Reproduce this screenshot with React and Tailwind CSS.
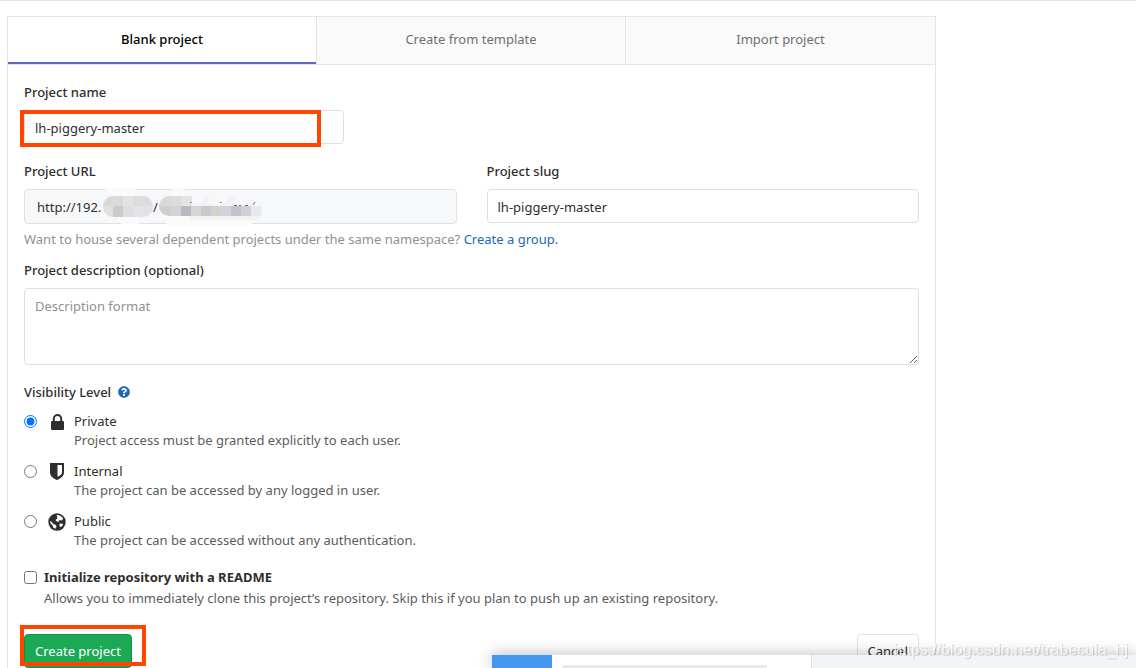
import React, { useState } from 'react';
import { FaQuestionCircle } from 'react-icons/fa';

const TABS = ['Blank project', 'Create from template', 'Import project'];

function LockIcon() {
  return (
    <svg width="13" height="16" viewBox="0 0 13 16" aria-hidden="true">
      <path fill="none" stroke="#2e2e2e" strokeWidth="2" d="M2.800 8V4.700a3.700 3.700 0 0 1 7.400 0V8" />
      <rect y="7" width="13" height="9" rx="1" fill="#2e2e2e" />
    </svg>
  );
}

function ShieldIcon() {
  return (
    <svg width="14" height="17" viewBox="0 0 14 17" aria-hidden="true">
      <path fill="#2e2e2e" fillRule="evenodd" d="M0 0h14v9.500c0 3.800-3.500 6-7 7.500-3.500-1.500-7-3.700-7-7.500zm7.500 2v11.800c2.300-1.100 4.500-2.500 4.500-4.600V2z" />
    </svg>
  );
}

function EarthIcon() {
  return (
    <svg width="18" height="18" viewBox="0 0 18 18" aria-hidden="true">
      <circle cx="9" cy="9" r="8.700" fill="#2e2e2e" />
      <path fill="#fff" d="M8.500 2.100c3-.2 5.400 1.100 6.700 3.700l-1.600 1.600-1.900-.4-1.200 1.700-1.700-.3-1.400-1.300 1.700-1.300.2-1.700z" />
      <path fill="#fff" d="M2 8l1.800 1 1.500 1.900 2.600 1.200.6 1.500-1 2.100-2.300-.9-.5-2.300-2-1.700z" />
      <path fill="#fff" d="M11.300 10.800l2.700-.3 1.200 1-1.500 2-1.900.4z" />
    </svg>
  );
}

const LEVELS = [
  {
    id: 'private',
    name: 'Private',
    help: 'Project access must be granted explicitly to each user.',
    icon: <LockIcon />,
  },
  {
    id: 'internal',
    name: 'Internal',
    help: 'The project can be accessed by any logged in user.',
    icon: <ShieldIcon />,
  },
  {
    id: 'public',
    name: 'Public',
    help: 'The project can be accessed without any authentication.',
    icon: <EarthIcon />,
  },
];

const HOST_TOP = ['#d9d9da', '#dadadb', '#e2e4e4', '#dcdcdd', '#dcdbdf'];
const HOST_BOTTOM = ['#e0e0e0', '#cbcbcf', '#dededf', '#e3e2e8', '#e2e1e7'];
const PATH_TOP = ['#dadadb', '#dcdcdd', '#e3e4e5'];
const PATH_BOTTOM = ['#cfced0', '#d4d4d5', '#b9b9c1', '#d5d5d6', '#c9c9cd', '#d6d0cc', '#d2d3de', '#c6c3c9', '#d1cfd5', '#e8e9ec'];

// pixelated host part of the namespace url
function MaskedHost() {
  return (
    <svg width="50" height="33" className="shrink-0 overflow-visible" aria-hidden="true">
      <path fill="#fafafb" d="M2-2h30v8H4zM14 26h22v8H18z" />
      <clipPath id="host"><rect y="6" width="50" height="21" rx="10" /></clipPath>
      <g clipPath="url(#host)">
        {HOST_TOP.map((c, i) => <rect key={i} x={i * 10} y="6" width="10" height="10" fill={c} />)}
        {HOST_BOTTOM.map((c, i) => <rect key={i} x={i * 10} y="16" width="10" height="11" fill={c} />)}
      </g>
    </svg>
  );
}

// pixelated group part of the namespace url
function MaskedPath() {
  return (
    <svg width="104" height="33" className="shrink-0 overflow-visible" aria-hidden="true">
      <path fill="#fafafb" d="M14-2h12v8H14zM4 26h92l-4 9H8z" />
      <path fill="#f1f2f4" d="M30 12l10 2 8-7 3 1-4 6 14 1 12-8 4 1-3 6 20 2 8 4q4 5-2 10H30z" />
      <clipPath id="path"><rect y="6" width="116" height="20" rx="10" /></clipPath>
      <g clipPath="url(#path)">
        {PATH_TOP.map((c, i) => <rect key={i} x={i * 11} y="6" width="11" height="10" fill={c} />)}
        {PATH_BOTTOM.map((c, i) => <rect key={i} x={i * 10 + 2} y="16" width="10" height="10" fill={c} />)}
        <rect y="16" width="3" height="10" fill="#cfced0" />
      </g>
      <path stroke="#6b6b76" fill="none" d="M31 12.500h1.500M61 12.500h1.500M75 15.500h3M80 15.500h2M86 15.500h3M94 15l2-3" />
    </svg>
  );
}

const inputClass = 'block h-[34px] w-full rounded border border-[#dfdfdf] bg-white px-[10px] pt-px text-[#2e2e2e]';
const labelClass = 'block h-5 font-medium';

function App() {
  const [tab, setTab] = useState(TABS[0]);
  const [name, setName] = useState('lh-piggery-master');
  const [level, setLevel] = useState('private');

  return (
    <div className="h-screen overflow-hidden border-t border-[#e5e5e5] bg-white pt-[15px] font-['Noto_Sans',sans-serif] text-[13px] leading-5 text-[#2e2e2e]">
      <main className="mr-[200px] ml-[7px] border border-[#e5e5e5]">
        <nav className="grid grid-cols-3 border-b border-[#e5e5e5]">
          {TABS.map((t) => (
            <div key={t} className="border-r border-[#e5e5e5] last:border-r-0">
              <button
                type="button"
                onClick={() => setTab(t)}
                className={
                  t === tab
                    ? 'block h-[47px] w-full border-b-2 border-[#6666c4] bg-white pb-0.5 font-medium text-black'
                    : 'block h-[47px] w-full bg-[#fafafa] pb-1 text-[#707070]'
                }
              >
                {t}
              </button>
            </div>
          ))}
        </nav>

        <form className="px-4 pt-[17px]" onSubmit={(e) => e.preventDefault()}>
          <label htmlFor="name" className={labelClass}>Project name</label>
          <div className="relative mt-2 w-[320px]">
            <input id="name" value={name} onChange={(e) => setName(e.target.value)} className={inputClass} />
            <div className="pointer-events-none absolute top-0 -left-1 h-[37px] w-[301px] border-4 border-[#ff4500]" />
          </div>

          <div className="mt-[17px] grid grid-cols-2 gap-[30px]">
            <div>
              <label htmlFor="url" className={labelClass}>Project URL</label>
              <div className="mt-2 flex h-[35px] items-center rounded border border-[#e1e1e1] bg-[#f7f8fa] pl-3">
                <input id="url" readOnly value="http://192." className="w-[66px] bg-transparent" />
                <MaskedHost />
                <span className="w-[6px]">/</span>
                <MaskedPath />
              </div>
            </div>
            <div>
              <label htmlFor="slug" className={labelClass}>Project slug</label>
              <input id="slug" value={name} onChange={(e) => setName(e.target.value)} className={`mt-2 ${inputClass}`} />
            </div>
          </div>

          <p className="mt-[5px] text-[#919191]">
            Want to house several dependent projects under the same namespace?{' '}
            <a href="#group" className="text-[#1b69b6]">Create a group.</a>
          </p>

          <label htmlFor="description" className={`mt-[11px] ${labelClass}`}>Project description (optional)</label>
          <textarea
            id="description"
            placeholder="Description format"
            className="mt-2 block h-[77px] w-full rounded border border-[#dfdfdf] px-[10px] py-[7px] placeholder:text-[#919191]"
          />

          <fieldset className="mt-[17px]">
            <legend className="flex items-center gap-[7px] font-medium">
              Visibility Level
              <a href="#help" aria-label="Visibility help" className="text-[#1b69b6]"><FaQuestionCircle size={12} /></a>
            </legend>
            <div className="mt-[9px] flex flex-col gap-[11px]">
              {LEVELS.map((l) => (
                <label key={l.id} className="flex h-[39px] items-start">
                  <input
                    type="radio"
                    name="level"
                    checked={level === l.id}
                    onChange={() => setLevel(l.id)}
                    className="mt-1 h-[13px] w-[13px]"
                  />
                  <span className="ml-[11px] flex h-[21px] w-[18px] items-center justify-center">{l.icon}</span>
                  <span className="ml-2">
                    <span className="block h-[19px]">{l.name}</span>
                    <span className="block text-[#5c5c5c]">{l.help}</span>
                  </span>
                </label>
              ))}
            </div>
          </fieldset>

          <label className="mt-[17px] flex items-start gap-[7px]">
            <input type="checkbox" className="mt-1 h-[13px] w-[13px]" />
            <span>
              <span className="block font-bold">Initialize repository with a README</span>
              <span className="mt-px block text-[#5c5c5c]">
                Allows you to immediately clone this project’s repository. Skip this if you plan to push up an existing repository.
              </span>
            </span>
          </label>

          <div className="mt-[26px] flex justify-between pb-4">
            <div className="relative">
              <button type="submit" className="h-[34px] rounded border border-[#168f48] bg-[#1aaa55] px-[10px] text-white">
                Create project
              </button>
              <div className="pointer-events-none absolute -top-[9px] -left-1 h-[41px] w-[126px] border-4 border-[#ff4500]" />
            </div>
            <button type="button" className="h-[34px] rounded border border-[#e3e3e3] px-[10px]">Cancel</button>
          </div>
        </form>
      </main>

      {/* top edge of the window lying over the page */}
      <div className="fixed right-0 bottom-0 left-[492px] flex h-[13px] bg-white shadow-[0_0_16px_rgba(0,0,0,0.3)]">
        <div className="w-[60px] bg-[#4497f0]" />
        <div className="w-[259px] px-[10px] pt-[10px]">
          <div className="h-[3px] w-[205px] rounded-t bg-[#e7e7ee]" />
        </div>
        <div className="flex-1 border-l border-[#dfe1e5] bg-[#f3f4f7]" />
      </div>

      <span className="fixed right-2 bottom-2 font-['Liberation_Sans',sans-serif] text-base leading-5 text-white/70 [text-shadow:1px_1px_1px_rgba(0,0,0,0.15)]">
        https://blog.csdn.net/trabecula_hj
      </span>
    </div>
  );
}

export default App;
